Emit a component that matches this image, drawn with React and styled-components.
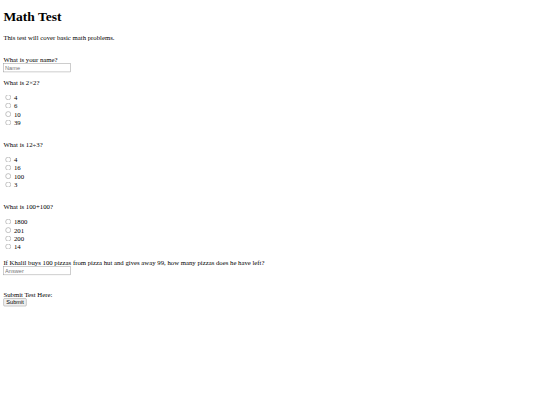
import React from 'react'
import styled, { createGlobalStyle } from 'styled-components'

const GlobalStyle = createGlobalStyle`
    html, body {
        margin: 0;
        background: #fff;
    }
`

const Frame = styled.div`
    width: 540px;
    height: 405px;
    overflow: hidden;
`

// the reference is a 1280x960 page shrunk to 540x405
const Page = styled.div`
    width: 1280px;
    height: 960px;
    box-sizing: border-box;
    padding: 0 8px 8px;
    transform: scale(0.421875);
    transform-origin: 0 0;
    display: flow-root;
    font-family: "Liberation Serif", "Times New Roman", serif;
    font-size: 16px;
    color: #000;
`

const Title = styled.h1`
    font-size: 32px;
    font-weight: bold;
    margin: 21.44px 0;
`

const Intro = styled.p`
    margin: 16px 0;
`

const Question = styled.p`
    margin: 16px 0;
`

const Blank = styled.div`
    height: ${ props => props.lines * 18.4 }px;
`

const Option = styled.label`
    display: block;
    height: 19.75px;
    line-height: 18.4px;
`

const Radio = styled.input.attrs({ type: 'radio' })`
    margin: 3px 3px 0 5px;
`

const TextInput = styled.input.attrs({ type: 'text' })`
    font-family: "Liberation Sans", Arial, sans-serif;
    font-size: 13.33px;
    padding: 2px 3px;
    border: 1px solid #8a8a8a;
    width: 151px;
    &::placeholder {
        color: #757575;
    }
`

const SubmitButton = styled.button`
    font-family: "Liberation Sans", Arial, sans-serif;
    font-size: 13.33px;
    padding: 1px 6px;
    background: #efefef;
    border: 1px solid #8a8a8a;
    border-radius: 3px;
    color: #000;
`

const questions = [
    { name: 'q1', text: 'What is 2×2?', options: ['4', '6', '10', '39'] },
    { name: 'q2', text: 'What is 12÷3?', options: ['4', '16', '100', '3'] },
    { name: 'q3', text: 'What is 100+100?', options: ['1800', '201', '200', '14'] },
]

export default function App() {
    return (
        <Frame>
            <GlobalStyle />
            <Page>
                <Title>Math Test</Title>
                <Intro>This test will cover basic math problems.</Intro>
                <form onSubmit={ e => e.preventDefault() }>
                    <Blank lines={ 1 } />
                    <label>What is your name?</label>
                    <br />
                    <TextInput placeholder="Name" />
                    { questions.map(q => (
                        <React.Fragment key={ q.name }>
                            <Question>{ q.text }</Question>
                            { q.options.map(opt => (
                                <Option key={ opt }>
                                    <Radio name={ q.name } value={ opt } /> { opt }
                                </Option>
                            )) }
                            <Blank lines={ 1 } />
                        </React.Fragment>
                    )) }
                    <label>If Khalil buys 100 pizzas from pizza hut and gives away 99, how many pizzas does he have left?</label>
                    <br />
                    <TextInput placeholder="Answer" />
                    <Blank lines={ 2 } />
                    <label>Submit Test Here:</label>
                    <br />
                    <SubmitButton type="submit">Submit</SubmitButton>
                </form>
            </Page>
        </Frame>
    )
}
